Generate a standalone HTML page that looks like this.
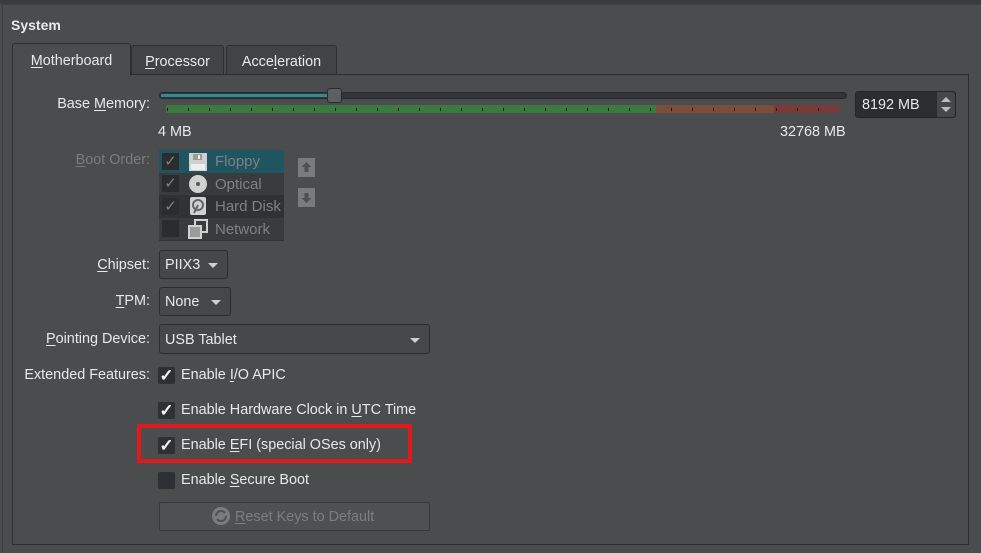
<!DOCTYPE html>
<html><head><meta charset="utf-8"><style>
*{box-sizing:border-box;margin:0;padding:0}
body{width:981px;height:553px;background:#4b4c4e;font-family:"Liberation Sans",sans-serif;font-size:14.4px;color:#e8e8e8;position:relative;overflow:hidden}
.a{position:absolute}
.lbl{position:absolute;text-align:right;white-space:nowrap}
u{text-decoration:underline;text-underline-offset:2px}
.tab{position:absolute;background:#46474a;border:1px solid #2e2f31;border-bottom:none;border-radius:3px 3px 0 0;text-align:center;padding-top:6px}
.combo{position:absolute;background:#46474a;border:1px solid #2c2d2f;border-radius:3px;padding:6px 0 0 5px}
.arr{position:absolute;width:0;height:0;border-left:5px solid transparent;border-right:5px solid transparent;border-top:5px solid #cfcfcf}
.cb{position:absolute;width:17px;height:17px;background:#2f3033;border-radius:2px;color:#f2f2f2;font-size:17px;font-weight:bold;line-height:17px;text-align:center}
.row{position:absolute;left:0;width:125px;height:22.5px}
</style></head><body>
<div class="a" style="left:0;top:0;width:981px;height:4px;background:#3a3b3d"></div>
<div class="a" style="left:2px;top:4px;width:979px;height:549px;border-left:1px solid #3e3f41;border-top:1px solid #3e3f41"></div>
<div class="a" style="left:11px;top:17px;font-weight:bold;font-size:14px">System</div>
<!-- pane -->
<div class="a" style="left:12px;top:74px;width:957px;height:471px;border:1px solid #2c2d2f;background:#4b4c4e"></div>
<div class="tab" style="left:12px;top:43px;width:119px;height:33px;padding-top:9px;background:#4b4c4e;border-color:#2c2d2f"><u>M</u>otherboard</div>
<div class="tab" style="left:131px;top:45px;width:93px;height:29px;padding-top:8px;background:#424346"><u>P</u>rocessor</div>
<div class="tab" style="left:226px;top:45px;width:111px;height:29px;padding-top:8px;background:#424346">Acce<u>l</u>eration</div>
<!-- memory -->
<div class="lbl" style="right:831px;top:96px">Base <u>M</u>emory:</div>
<div class="a" style="left:159px;top:92px;width:688px;height:7px;background:#333436;border:1px solid #2a2b2d;border-radius:4px"></div>
<div class="a" style="left:161px;top:94px;width:170px;height:3px;background:#2f8a9a"></div>
<div class="a" style="left:327px;top:88px;width:15px;height:15px;background:#5e5f62;border:1px solid #2a2b2d;border-radius:3px"></div>
<div class="a" style="left:166px;top:105px;width:490px;height:8px;background:#3a7a3e"></div>
<div class="a" style="left:656px;top:105px;width:118px;height:8px;background:#7a4e3a"></div>
<div class="a" style="left:774px;top:105px;width:65px;height:8px;background:#7a3a3a"></div>
<svg class="a" style="left:166px;top:105px" width="680" height="8">
<g stroke="#1a1a1a" stroke-width="1">
<path d="M1.5 3v3M22.5 3v3M43.5 3v3M64.5 3v3M85.5 3v3M106.5 3v3M127.5 3v3M148.5 3v3M169.5 3v3M190.5 3v3M211.5 3v3M232.5 3v3M253.5 3v3M274.5 3v3M295.5 3v3M316.5 3v3M337.5 3v3M358.5 3v3M379.5 3v3M400.5 3v3M421.5 3v3M442.5 3v3M463.5 3v3M484.5 3v3M505.5 3v3M526.5 3v3M547.5 3v3M568.5 3v3M589.5 3v3M610.5 3v3M631.5 3v3M652.5 3v3"/></g></svg>
<div class="a" style="left:158px;top:124px">4 MB</div>
<div class="a" style="left:780px;top:124px">32768 MB</div>
<div class="a" style="left:855px;top:91px;width:101px;height:27px;background:#2c2d30;border:1px solid #25262a;border-radius:3px;padding:5px 0 0 6px">8192 MB</div>
<div class="a" style="left:937px;top:92px;width:18px;height:25px;background:#46474a;border-radius:0 3px 3px 0"></div>
<div class="a" style="left:941px;top:97px;border-left:5px solid transparent;border-right:5px solid transparent;border-bottom:5px solid #bbb"></div>
<div class="a" style="left:941px;top:107px;border-left:5px solid transparent;border-right:5px solid transparent;border-top:5px solid #bbb"></div>
<!-- boot order -->
<div class="lbl" style="right:831px;top:152px;color:#7a7b7d"><u>B</u>oot Order:</div>
<div class="a" style="left:159px;top:150px;width:125px;height:91px;background:#353638;color:#7e8083;font-size:15px">
<div class="row" style="top:0;background:#1f5560"></div>
<div class="row" style="top:22.5px;background:#3a3b3d"></div>
<div class="row" style="top:45px;background:#313234"></div>
<div class="row" style="top:67.5px;background:#3a3b3d"></div>
<div class="a" style="left:3px;top:3px;width:17px;height:17px;background:#2b2c2e;text-align:center;line-height:17px;font-size:15px">✓</div>
<div class="a" style="left:3px;top:25px;width:17px;height:17px;background:#2b2c2e;text-align:center;line-height:17px;font-size:15px">✓</div>
<div class="a" style="left:3px;top:48px;width:17px;height:17px;background:#2b2c2e;text-align:center;line-height:17px;font-size:15px">✓</div>
<div class="a" style="left:3px;top:70px;width:17px;height:17px;background:#2b2c2e"></div>
<svg class="a" style="left:29px;top:2px" width="20" height="20"><rect x="1" y="1" width="18" height="18" fill="#cfd0d0"/><rect x="5" y="2" width="9" height="6" fill="#9a9b9b"/><rect x="10" y="3" width="2" height="4" fill="#eee"/><rect x="3" y="12" width="14" height="6" fill="#eee"/></svg>
<svg class="a" style="left:29px;top:24px" width="20" height="20"><circle cx="10" cy="10" r="9" fill="#d0d1d1"/><circle cx="10" cy="10" r="2" fill="#555"/></svg>
<svg class="a" style="left:30px;top:46px" width="18" height="20"><rect x="1" y="1" width="16" height="18" rx="2" fill="#d0d1d1"/><circle cx="9" cy="9" r="5" fill="none" stroke="#666" stroke-width="2"/><path d="M9 9l-4 8" stroke="#666" stroke-width="2"/></svg>
<svg class="a" style="left:29px;top:69px" width="20" height="20"><rect x="7" y="1" width="12" height="12" fill="none" stroke="#cfd0d0" stroke-width="2"/><rect x="1" y="7" width="12" height="12" fill="#9a9b9b" stroke="#cfd0d0" stroke-width="2"/></svg>
<div class="a" style="left:56px;top:3px">Floppy</div>
<div class="a" style="left:56px;top:26px">Optical</div>
<div class="a" style="left:56px;top:48px">Hard Disk</div>
<div class="a" style="left:56px;top:71px">Network</div>
</div>
<svg class="a" style="left:298px;top:158px" width="17" height="19"><rect width="17" height="19" fill="#7a7b7d"/><path d="M8.5 4l-5 5h3v5h4v-5h3z" fill="#4e4f51"/></svg>
<svg class="a" style="left:298px;top:188px" width="17" height="19"><rect width="17" height="19" fill="#7a7b7d"/><path d="M8.5 15l-5-5h3v-5h4v5h3z" fill="#4e4f51"/></svg>
<!-- combos -->
<div class="lbl" style="right:831px;top:257px"><u>C</u>hipset:</div>
<div class="combo" style="left:159px;top:250px;width:69px;height:29px">PIIX3</div>
<div class="arr" style="left:208px;top:263px"></div>
<div class="lbl" style="right:831px;top:293px"><u>T</u>PM:</div>
<div class="combo" style="left:159px;top:287px;width:72px;height:29px">None</div>
<div class="arr" style="left:211px;top:300px"></div>
<div class="lbl" style="right:831px;top:331px"><u>P</u>ointing Device:</div>
<div class="combo" style="left:159px;top:324px;width:271px;height:30px;padding-top:7px">USB Tablet</div>
<div class="arr" style="left:410px;top:338px"></div>
<!-- checks -->
<div class="lbl" style="right:831px;top:367px">Extended Features:</div>
<div class="cb" style="left:158px;top:367px">✓</div><div class="a" style="left:181px;top:367px">Enable <u>I</u>/O APIC</div>
<div class="cb" style="left:158px;top:402px">✓</div><div class="a" style="left:181px;top:402px">Enable Hardware Clock in <u>U</u>TC Time</div>
<div class="cb" style="left:158px;top:437px">✓</div><div class="a" style="left:181px;top:437px">Enable <u>E</u>FI (special OSes only)</div>
<div class="cb" style="left:158px;top:472px"></div><div class="a" style="left:181px;top:472px">Enable <u>S</u>ecure Boot</div>
<div class="a" style="left:137px;top:424px;width:275px;height:39px;border:4px solid #e3171c"></div>
<div class="a" style="left:159px;top:502px;width:271px;height:29px;background:#4f5052;border:1px solid #38393b;border-radius:2px;color:#7c7d80;padding-top:6px;padding-left:75px"><u>R</u>eset Keys to Default</div>
<svg class="a" style="left:211px;top:506px" width="20" height="20"><circle cx="10" cy="10" r="9" fill="#7a7b7d"/><path d="M5 10a5 5 0 0 1 9-3M15 10a5 5 0 0 1-9 3" stroke="#4f5052" stroke-width="2" fill="none"/></svg>
</body></html>
